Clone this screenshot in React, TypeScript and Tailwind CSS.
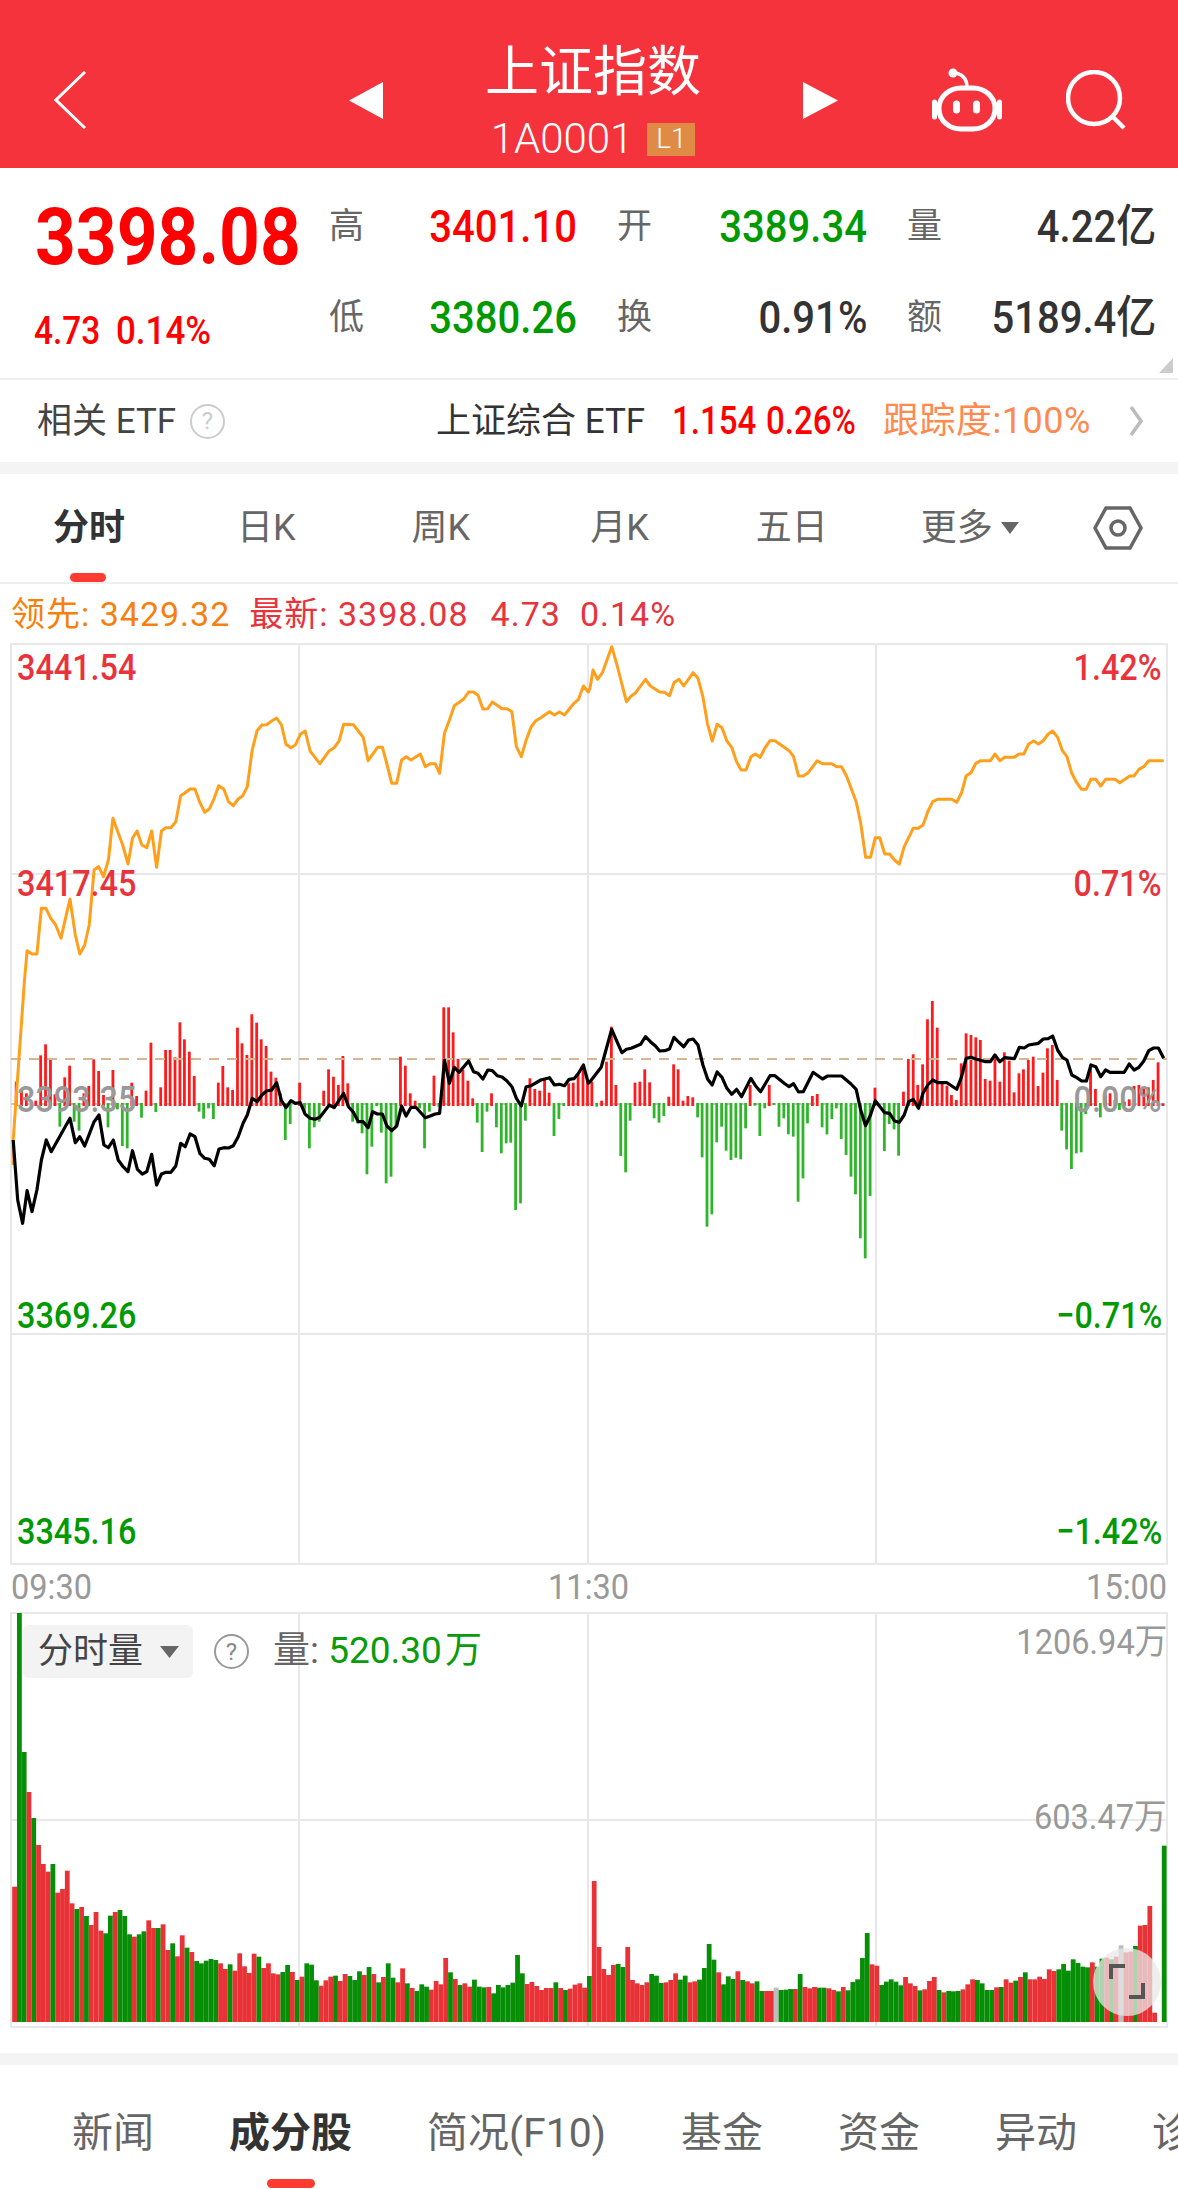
const CHART_TOP = 643;
const VOL_TOP = 1612;

// readings off the 2.66x crops, left half and right half of the page
const lx = (x: number) => x / 2.657;
const rx = (x: number) => 590 + x / 2.667;

const orangeL = [[35,2055],[35,1980],[65,1500],[72,1412],[85,1422],[98,1422],[110,1285],[122,1285],[135,1315],[148,1335],[162,1375],[175,1310],[186,1257],[200,1365],[212,1422],[225,1395],[237,1335],[250,1170],[262,1160],[275,1190],[288,1140],[300,1015],[313,1055],[326,1095],[340,1152],[352,1075],[364,1053],[377,1095],[390,1103],[403,1053],[416,1162],[429,1052],[441,1043],[454,1043],[467,1025],[480,947],[492,938],[505,927],[518,927],[530,965],[544,997],[556,987],[569,955],[581,917],[595,928],[607,965],[620,977],[633,957],[645,947],[657,920],[670,810],[683,752],[696,735],[708,734],[722,723],[735,714],[748,735],[760,793],[773,803],[785,795],[798,763],[811,753],[824,813],[837,832],[850,851],[862,832],[875,812],[888,803],[901,783],[913,733],[939,734],[952,753],[965,772],[978,842],[990,823],[1003,802],[1016,802],[1028,852],[1041,910],[1054,910],[1067,840],[1079,830],[1092,840],[1117,822],[1130,860],[1143,851],[1156,851],[1168,880],[1181,760],[1194,720],[1207,677],[1220,667],[1232,657],[1245,636],[1258,636],[1270,646],[1283,687],[1296,686],[1308,666],[1321,676],[1334,686],[1347,686],[1360,695],[1372,800],[1385,830],[1398,780],[1411,741],[1424,722],[1437,713],[1460,695],[1473,705],[1486,696],[1500,705],[1512,688],[1525,670],[1537,658],[1550,618],[1563,636]];
const orangeR = [[0,625],[8,570],[20,598],[33,578],[58,500],[72,555],[97,665],[110,648],[122,638],[148,598],[161,618],[186,636],[199,637],[212,647],[224,608],[237,598],[250,618],[275,578],[288,595],[301,650],[313,730],[326,783],[339,733],[352,743],[365,783],[378,802],[391,845],[403,870],[416,870],[429,830],[441,822],[454,832],[467,803],[480,782],[493,782],[518,802],[531,812],[543,830],[556,888],[569,888],[582,878],[606,842],[620,851],[645,851],[658,860],[671,860],[684,888],[710,965],[722,1030],[735,1132],[748,1132],[761,1073],[773,1073],[786,1122],[799,1122],[812,1140],[825,1152],[838,1100],[862,1045],[875,1045],[888,1035],[901,995],[914,965],[927,958],[965,958],[978,967],[991,938],[1003,888],[1016,878],[1029,850],[1042,842],[1068,842],[1080,822],[1093,842],[1106,832],[1132,832],[1144,822],[1157,822],[1170,792],[1183,783],[1196,792],[1209,782],[1222,762],[1234,753],[1247,772],[1260,812],[1272,830],[1285,880],[1298,908],[1311,928],[1323,928],[1336,898],[1349,898],[1362,918],[1375,898],[1400,898],[1413,908],[1439,888],[1451,888],[1464,868],[1477,860],[1490,842],[1530,842]];
const blackL = [[35,480],[47,660],[60,730],[72,632],[85,695],[98,630],[110,540],[123,480],[136,515],[161,465],[186,415],[200,488],[212,470],[225,498],[250,425],[263,405],[276,495],[288,503],[301,480],[314,540],[327,560],[340,575],[352,512],[365,568],[378,582],[390,575],[403,523],[416,615],[429,582],[441,577],[454,577],[467,558],[480,490],[492,500],[505,462],[518,470],[531,520],[544,535],[556,538],[569,557],[582,507],[595,503],[607,504],[620,497],[633,470],[646,430],[657,405],[670,355],[683,365],[696,345],[708,333],[722,330],[735,308],[748,362],[760,383],[773,362],[785,370],[798,368],[811,403],[824,415],[837,418],[850,412],[875,375],[888,383],[913,340],[926,380],[939,397],[952,425],[965,425],[978,443],[990,395],[1003,402],[1016,402],[1028,438],[1041,452],[1054,438],[1067,378],[1079,408],[1092,382],[1105,382],[1130,413],[1143,408],[1156,402],[1168,400],[1181,240],[1194,310],[1207,262],[1220,277],[1245,243],[1258,275],[1270,280],[1283,297],[1296,270],[1308,272],[1321,287],[1334,291],[1347,303],[1360,320],[1372,355],[1385,378],[1398,320],[1411,317],[1437,300],[1460,293],[1473,315],[1486,313],[1500,317],[1512,298],[1525,296],[1537,280],[1550,255],[1563,310]];
const blackR = [[0,305],[30,262],[58,148],[72,185],[85,218],[97,208],[110,205],[135,193],[148,170],[161,185],[174,197],[186,213],[199,212],[212,207],[224,172],[237,187],[250,200],[263,180],[275,177],[288,195],[301,255],[314,298],[326,315],[339,276],[352,292],[365,325],[378,343],[391,328],[404,350],[429,295],[442,318],[455,335],[480,287],[493,287],[518,310],[531,320],[543,311],[556,336],[569,335],[595,277],[620,297],[634,288],[671,288],[696,312],[710,328],[722,390],[735,437],[748,405],[761,362],[786,398],[799,400],[812,423],[825,427],[838,405],[850,365],[862,358],[876,385],[888,340],[901,315],[914,300],[927,308],[952,308],[978,328],[991,290],[1003,235],[1016,232],[1029,237],[1055,245],[1068,245],[1080,225],[1093,245],[1106,233],[1132,236],[1145,202],[1158,204],[1170,195],[1196,190],[1209,177],[1222,176],[1234,168],[1247,210],[1260,232],[1272,240],[1285,285],[1298,293],[1311,303],[1324,303],[1336,255],[1349,260],[1362,290],[1375,270],[1387,277],[1425,277],[1438,252],[1451,270],[1464,262],[1477,243],[1490,212],[1503,204],[1516,204],[1530,235]];

// buy/sell bars: [x, end], end above 372 is red, below is green
const flowL = [[43,305],[57,330],[70,340],[95,362],[108,226],[121,193],[134,240],[146,343],[159,440],[172,292],[185,257],[197,425],[210,452],[223,340],[236,318],[249,238],[262,273],[275,345],[287,442],[300,270],[312,388],[325,498],[338,505],[350,308],[363,348],[376,413],[388,332],[401,188],[414,396],[427,322],[440,210],[452,210],[465,232],[478,127],[490,178],[503,215],[516,288],[529,395],[541,416],[554,385],[567,417],[580,308],[592,258],[605,322],[618,330],[631,143],[643,190],[656,225],[669,103],[682,128],[694,178],[707,198],[720,275],[733,293],[745,340],[758,480],[771,432],[796,308],[809,400],[822,505],[835,442],[848,425],[860,332],[873,268],[886,290],[899,315],[911,228],[924,310],[937,425],[950,430],[962,460],[975,583],[988,500],[1001,378],[1013,458],[1026,610],[1039,590],[1052,440],[1064,230],[1077,257],[1090,340],[1103,362],[1115,385],[1128,505],[1141,395],[1153,287],[1166,380],[1179,82],[1192,82],[1204,157],[1217,237],[1230,270],[1243,302],[1256,355],[1268,428],[1281,516],[1294,395],[1306,340],[1319,442],[1332,520],[1345,490],[1357,488],[1370,690],[1383,670],[1396,422],[1408,295],[1421,327],[1434,332],[1447,300],[1459,338],[1472,468],[1485,417],[1498,378],[1511,310],[1523,308],[1536,285],[1549,265],[1561,305]];
const flowR = [[5,305],[18,380],[31,362],[44,245],[57,140],[69,315],[82,528],[95,577],[107,422],[120,308],[133,305],[146,268],[159,307],[171,415],[184,428],[197,408],[210,350],[223,253],[235,268],[248,362],[261,348],[274,352],[287,412],[299,532],[312,740],[325,703],[338,487],[351,440],[363,512],[376,540],[389,533],[402,538],[415,445],[427,315],[440,377],[453,468],[466,385],[478,315],[491,375],[504,440],[517,415],[529,463],[542,470],[555,665],[568,595],[580,430],[593,348],[606,342],[619,442],[632,463],[645,417],[657,385],[670,477],[683,525],[696,590],[708,643],[721,775],[734,835],[747,648],[760,323],[785,513],[798,432],[811,448],[823,527],[836,335],[849,237],[862,223],[874,315],[887,253],[900,118],[913,63],[926,143],[939,305],[952,317],[964,345],[977,360],[990,250],[1003,160],[1016,165],[1029,172],[1041,180],[1054,297],[1067,302],[1080,235],[1093,305],[1105,217],[1118,242],[1131,337],[1144,280],[1156,268],[1169,240],[1182,230],[1195,318],[1208,278],[1220,205],[1233,195],[1246,300],[1258,452],[1271,508],[1284,567],[1297,520],[1310,517],[1322,402],[1335,255],[1348,327],[1361,412],[1374,345],[1387,340],[1400,360],[1412,390],[1425,365],[1438,358],[1451,318],[1464,315],[1477,325],[1489,322],[1502,300],[1515,247],[1528,370]];

// volume, one bar a minute: colour + top of the bar in 3x units from y=1840
const volume = "r140 g-681 g-264 r-144 g-66 r15 r72 r95 g72 r158 r147 r92 r190 g207 r201 g228 r255 r216 r272 g280 g227 r216 g210 g228 g283 r290 g283 g274 r241 r264 g264 r253 r330 g310 r349 r286 g323 r336 g363 g370 g362 g357 g360 r370 r387 g373 r392 r340 r379 r399 r341 g350 r384 r370 r400 r403 g396 g375 r396 g420 r410 g370 g374 g421 r437 r421 r410 g407 r423 r402 g408 g420 g394 r405 g381 r402 g427 r411 g370 g413 r427 r385 g430 r444 g453 g433 g440 r449 r423 r433 r354 g397 r417 g435 r430 r440 g419 g440 g442 r441 g460 g435 g442 g435 g428 g345 g400 r432 r426 r438 r450 r444 r444 g427 r444 g450 r446 r434 r430 r443 g408 r123 r321 r387 r405 r375 g372 g381 r321 r420 r430 r435 r427 g402 g407 g429 r427 r420 r400 g419 g407 r427 r424 g419 g384 g312 g359 r397 g433 g409 g417 r394 g420 r424 r430 g424 g453 r453 r453 n443 g450 g449 g447 r447 g402 r441 r445 r441 g443 g443 r445 r450 g454 r441 g451 g426 g418 g354 g279 r373 r377 g435 g425 g418 g425 g436 r411 r430 r438 g451 r448 r423 r411 g450 r457 g453 g454 g453 r448 r433 r418 g420 g430 g450 g450 r442 g441 r418 r428 g422 r411 g397 r418 r418 r410 r417 r388 r393 g388 g372 g392 g358 g369 g380 g382 r367 g380 g356 r353 g358 r350 n316 r337 r335 g318 r257 r255 r198 r518 x0 g17".split(" ");

const volColor: Record<string, string> = { r: "#e93236", g: "#078e07", n: "#bdbdbd" };

function line(left: number[][], right: number[][], base: number, top: number) {
  const a = left.map(([x, y]) => `${lx(x).toFixed(1)},${(base + y / 3 - top).toFixed(1)}`);
  const b = right.map(([x, y]) => `${rx(x).toFixed(1)},${(base + y / 3 - top).toFixed(1)}`);
  return [...a, ...b].join(" ");
}

function Grid({ h, mids }: { h: number; mids: number[] }) {
  return (
    <g stroke="#e8e8e8" strokeWidth="2">
      <rect x="11" y="1" width="1156" height={h - 2} fill="none" />
      {mids.map((y) => (
        <line key={y} x1="11" x2="1167" y1={y} y2={y} />
      ))}
      <line x1="299" x2="299" y1="0" y2={h} />
      <line x1="588" x2="588" y1="0" y2={h} />
      <line x1="876" x2="876" y1="0" y2={h} />
    </g>
  );
}

function MainChart() {
  const base = 1104 - CHART_TOP;
  const bars = [
    ...flowL.map(([x, y]) => [lx(x), y] as const),
    ...flowR.map(([x, y]) => [rx(x), y] as const),
  ];
  return (
    <svg width="1178" height="922" className="block">
      <Grid h={922} mids={[231, 691]} />
      <line x1="11" x2="1167" y1={base} y2={base} stroke="#c8c8c8" strokeWidth="2" strokeDasharray="6 8" />
      {bars.map(([x, y], i) => {
        const end = 980 + y / 3 - CHART_TOP;
        const up = y < 372;
        return (
          <rect
            key={i}
            x={x - 1.4}
            y={up ? end : base - 1}
            width="2.8"
            height={up ? base + 2 - end : end - base + 1}
            fill={up ? "#ff1b1b" : "#2fb52a"}
          />
        );
      })}
      <line x1="11" x2="1167" y1="416" y2="416" stroke="#d5b68e" strokeWidth="2" strokeDasharray="10 8" />
      <polyline points={line(orangeL, orangeR, 480, CHART_TOP)} fill="none" stroke="#ff9f1c" strokeWidth="3" strokeLinejoin="round" />
      <polyline points={line(blackL, blackR, 980, CHART_TOP)} fill="none" stroke="#000" strokeWidth="3.2" strokeLinejoin="round" />
    </svg>
  );
}

function VolumeChart() {
  const h = 416;
  const bottom = 2022 - VOL_TOP;
  return (
    <svg width="1178" height={h} className="block">
      <Grid h={h} mids={[208]} />
      {volume.map((v, i) => {
        const c = v[0];
        if (c === "x") return null;
        const top = 1840 + Number(v.slice(1)) / 3 - VOL_TOP;
        return <rect key={i} x={12.2 + i * 4.79} y={top} width="4.79" height={bottom - top} fill={volColor[c]} />;
      })}
    </svg>
  );
}

function ChartLabel({ className, children }: { className: string; children: React.ReactNode }) {
  return <span className={`absolute text-[37px] leading-none font-medium scale-x-[0.875] ${className}`}>{children}</span>;
}

function Help({ className }: { className: string }) {
  return (
    <span className={`flex h-[35px] w-[35px] items-center justify-center rounded-full border-2 text-[24px] leading-none ${className}`}>?</span>
  );
}

const stats = [
  ["高", "3401.10", "text-[#ff0000]"],
  ["开", "3389.34", "text-[#009a00]"],
  ["量", "4.22亿", "text-[#333]"],
  ["低", "3380.26", "text-[#009a00]"],
  ["换", "0.91%", "text-[#333]"],
  ["额", "5189.4亿", "text-[#333]"],
];

const chartTabs = [
  { label: "分时", cls: "ml-[53px] font-bold text-[#333]" },
  { label: "日K", cls: "ml-[112px]" },
  { label: "周K", cls: "ml-[116px]" },
  { label: "月K", cls: "ml-[120px]" },
  { label: "五日", cls: "ml-[107px]" },
  { label: "更多", cls: "ml-[93px]" },
];

const newsTabs = ["新闻", "成分股", "简况(F10)", "基金", "资金", "异动", "诊股"];

export default function App() {
  return (
    <div className="h-[2189px] w-full overflow-hidden bg-white [font-family:Roboto,'Noto_Sans_CJK_SC',sans-serif]">
      <header className="flex h-[168px] items-center bg-[#f4333c] pl-[54px] pt-[32px] text-white">
        <svg width="32" height="58" viewBox="0 0 32 58" fill="none" stroke="white" strokeWidth="3">
          <path d="M31 1 2 29l29 28" />
        </svg>
        <svg className="ml-[263px]" width="34" height="37" viewBox="0 0 34 37" fill="white">
          <path d="M34 0v37L0 18.5z" />
        </svg>
        <div className="mt-[2px] flex w-[420px] flex-col items-center">
          <div className="text-[54px] leading-[52px]">上证指数</div>
          <div className="mt-[24px] flex h-[33px] items-center gap-[14px]">
            <span className="text-[42px] leading-none font-light">1A0001</span>
            <span className="flex h-[33px] w-[48px] items-center justify-center bg-[#e08b45] text-[28px] leading-none font-light">L1</span>
          </div>
        </div>
        <svg width="35" height="37" viewBox="0 0 35 37" fill="white">
          <path d="M0 0v37l35-18.5z" />
        </svg>
        <svg className="ml-[94px]" width="70" height="64" viewBox="0 0 70 64" fill="none" stroke="white">
          <rect x="7" y="20" width="56" height="41" rx="22" ry="20" strokeWidth="5" />
          <path d="M2.5 34v15M67.5 34v15" strokeWidth="5" strokeLinecap="round" />
          <path d="M21 5c8 0 14 5 14 14" strokeWidth="3.5" />
          <circle cx="21" cy="5" r="4.5" fill="white" stroke="none" />
          <path d="M24.5 36v6M44.5 36v6" strokeWidth="7" strokeLinecap="round" />
        </svg>
        <svg className="ml-[64px]" width="60" height="60" viewBox="0 0 60 60" fill="none" stroke="white" strokeWidth="4.5">
          <circle cx="28" cy="28" r="26" />
          <path d="M47 47l11 11" />
        </svg>
      </header>

      <section className="relative flex h-[210px] pt-[12px]">
        <div className="w-[329px] pl-[35px] pt-[12px]">
          <div className="origin-left scale-x-[0.89] text-[80px] leading-[91px] font-bold text-[#ff0000]">3398.08</div>
          <div className="mt-[29px] flex text-[38px] leading-none font-medium text-[#ff0000]">
            <span className="-ml-[1px] w-[82px] origin-left scale-x-[0.88]">4.73</span>
            <span className="origin-left scale-x-[0.92]">0.14%</span>
          </div>
        </div>
        <div className="mt-[1px] grid h-[182px] grid-cols-[248px_250px_249px] grid-rows-2 gap-x-[40px]">
          {stats.map(([name, value, color]) => (
            <div key={name} className="flex items-center justify-between">
              <span className="text-[35px] leading-none text-[#666]">{name}</span>
              <span className={`origin-right scale-x-[0.89] text-[45px] leading-none font-medium ${color}`}>{value}</span>
            </div>
          ))}
        </div>
        <svg className="absolute bottom-[5px] right-[5px]" width="14" height="15" viewBox="0 0 14 15" fill="#ccc">
          <path d="M14 0v15H0z" />
        </svg>
      </section>

      <section className="flex h-[84px] items-center border-t-2 border-[#eeeeee] pl-[37px] text-[35px] leading-none">
        <span className="w-[142px] whitespace-nowrap text-[#444]">相关 ETF</span>
        <Help className="ml-[11px] border-[#ccc] text-[#ccc]" />
        <span className="ml-[211px] w-[212px] whitespace-nowrap text-[#333]">上证综合 ETF</span>
        <span className="ml-[24px] w-[94px] origin-left scale-x-[0.87] text-[38px] font-medium text-[#ff0000]">1.154</span>
        <span className="w-[117px] origin-left scale-x-[0.87] text-[38px] font-medium text-[#ff0000]">0.26%</span>
        <span className="w-[246px] text-[36px] tracking-[0.5px] text-[#ff8a50]">跟踪度:100%</span>
        <svg width="14" height="30" viewBox="0 0 14 30" fill="none" stroke="#bbb" strokeWidth="3.5">
          <path d="M2 1l10 14L2 29" />
        </svg>
      </section>
      <div className="h-[12px] bg-[#f4f4f4]" />

      <nav className="relative flex h-[110px] items-start border-b-2 border-[#eeeeee] pt-[36px] text-[36px] leading-[36px] text-[#666]">
        {chartTabs.map((t) => (
          <span key={t.label} className={t.cls}>{t.label}</span>
        ))}
        <svg className="ml-[8px] mt-[12px]" width="18" height="12" viewBox="0 0 18 12" fill="#666">
          <path d="M0 0h18L9 12z" />
        </svg>
        <svg className="ml-[74px] -mt-[4px]" width="50" height="44" viewBox="0 0 50 44" fill="none" stroke="#666" strokeWidth="3.5">
          <path d="M13 2h24l11 20-11 20H13L2 22z" />
          <circle cx="25" cy="22" r="7" />
        </svg>
        <span className="absolute left-[70px] top-[99px] h-[9px] w-[36px] rounded-full bg-[#ff3a30]" />
      </nav>

      <div className="flex h-[59px] items-center pl-[11px] text-[34px] leading-none tracking-[1px]">
        <span className="text-[#f77f0e]">领先: 3429.32</span>
        <span className="ml-[19px] text-[#e8333c]">最新: 3398.08</span>
        <span className="ml-[22px] text-[#e8333c]">4.73</span>
        <span className="ml-[19px] text-[#e8333c]">0.14%</span>
      </div>

      <div className="relative">
        <MainChart />
        <ChartLabel className="left-[17px] top-[6px] origin-left text-[#e8333c]">3441.54</ChartLabel>
        <ChartLabel className="left-[17px] top-[222px] origin-left text-[#e8333c]">3417.45</ChartLabel>
        <ChartLabel className="left-[17px] top-[438px] origin-left text-[#999]">3393.35</ChartLabel>
        <ChartLabel className="left-[17px] top-[654px] origin-left text-[#009a00]">3369.26</ChartLabel>
        <ChartLabel className="left-[17px] top-[870px] origin-left text-[#009a00]">3345.16</ChartLabel>
        <ChartLabel className="right-[16px] top-[6px] origin-right text-[#e8333c]">1.42%</ChartLabel>
        <ChartLabel className="right-[16px] top-[222px] origin-right text-[#e8333c]">0.71%</ChartLabel>
        <ChartLabel className="right-[16px] top-[438px] origin-right text-[#999]">0.00%</ChartLabel>
        <ChartLabel className="right-[16px] top-[654px] origin-right text-[#009a00]">−0.71%</ChartLabel>
        <ChartLabel className="right-[16px] top-[870px] origin-right text-[#009a00]">−1.42%</ChartLabel>
      </div>

      <div className="flex h-[47px] items-center justify-between px-[11px] pb-[2px] text-[35px] leading-none text-[#999]">
        <span className="origin-left scale-x-[0.93]">09:30</span>
        <span className="scale-x-[0.93]">11:30</span>
        <span className="origin-right scale-x-[0.93]">15:00</span>
      </div>

      <div className="relative h-[416px]">
        <VolumeChart />
        <div className="absolute left-[23px] top-[13px] flex h-[53px] w-[170px] items-center rounded-[6px] bg-[#f3f3f3] pl-[15px] text-[35px] leading-none text-[#444]">
          分时量
          <svg className="ml-[17px]" width="19" height="12" viewBox="0 0 19 12" fill="#666">
            <path d="M0 0h19L9.5 12z" />
          </svg>
        </div>
        <Help className="absolute left-[214px] top-[22px] border-[#999] text-[#888]" />
        <div className="absolute left-[273px] top-[21px] text-[37px] leading-[36px] text-[#666]">
          量: <span className="text-[#0a9b0a]">520.30<span className="ml-[3px]">万</span></span>
        </div>
        <span className="absolute right-[11px] top-[13px] text-[35px] leading-none text-[#999] origin-right scale-x-[0.93]">1206.94万</span>
        <span className="absolute right-[11px] top-[188px] text-[35px] leading-none text-[#999] origin-right scale-x-[0.93]">603.47万</span>
        <div className="absolute left-[1093px] top-[336px] flex h-[68px] w-[68px] items-center justify-center rounded-full bg-[#e8e8e8]/75">
          <svg width="36" height="36" viewBox="0 0 36 36" fill="none" stroke="#555" strokeWidth="4">
            <path d="M2 15V2h14M20 33h14V19" />
          </svg>
        </div>
      </div>

      <div className="h-[25px]" />
      <div className="h-[12px] bg-[#f4f4f4]" />

      <nav className="relative flex h-[124px] items-start gap-[75px] whitespace-nowrap pl-[72px] pt-[43px] text-[41px] leading-[50px] text-[#666]">
        {newsTabs.map((t) => (
          <span key={t} className={t === "成分股" ? "font-bold text-[#333]" : ""}>{t}</span>
        ))}
        <span className="absolute left-[267px] top-[114px] h-[9px] w-[48px] rounded-full bg-[#ff3a30]" />
      </nav>
    </div>
  );
}
